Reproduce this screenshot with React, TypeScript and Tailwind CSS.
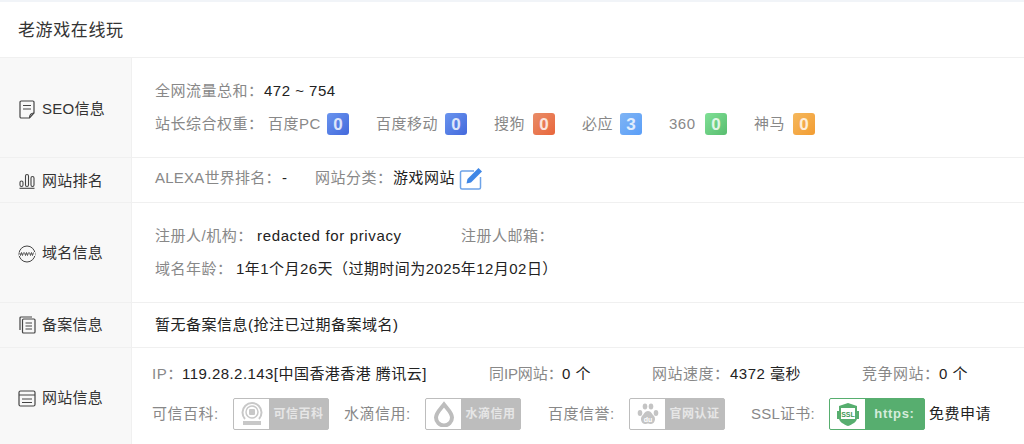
const FONT = "font-['Liberation_Sans','Noto_Sans_CJK_SC',sans-serif]";

function Score({ value, className }: { value: string; className: string }) {
  return (
    <span className={`ml-2 flex h-[22px] w-[22px] items-center justify-center rounded-[3px] bg-gradient-to-br text-[17px] font-bold leading-none tracking-normal text-white/80 ${className}`}>
      {value}
    </span>
  );
}

function SideLabel({ icon, label, className = "" }: { icon: React.ReactNode; label: string; className?: string }) {
  return (
    <div className={`flex w-[132px] shrink-0 items-center border-r border-[#f0f0f0] bg-[#f8f8f8] pl-[18px] text-[15px] tracking-[0.25px] text-[#333] ${className}`}>
      <span className="mr-[6px] flex h-5 w-[18px] items-center justify-center">{icon}</span>
      {label}
    </div>
  );
}

function Badge({ icon, text, green }: { icon: React.ReactNode; text: string; green?: boolean }) {
  return (
    <span className={`flex h-8 w-[96px] items-stretch overflow-hidden rounded-[2px] border ${green ? "border-[#57ae6f] bg-[#57ae6f]" : "border-[#bdbdbd] bg-[#bdbdbd]"}`}>
      <span className="flex w-[35px] shrink-0 items-center justify-center bg-white">{icon}</span>
      <span className={`flex flex-1 items-center justify-center font-bold ${green ? "text-[13px] tracking-[0.7px] text-[#d5ecdb]" : "text-[12px] text-[#e6e6e6]"}`}>{text}</span>
    </span>
  );
}

const Label = ({ children, className = "" }: { children: React.ReactNode; className?: string }) => (
  <span className={`whitespace-nowrap text-[#888] ${className}`}>{children}</span>
);

export default function App() {
  return (
    <div className={`h-[444px] w-[1024px] overflow-hidden bg-white text-[15px] tracking-[0.5px] text-[#222] ${FONT}`}>
      <div className="h-[2px] bg-[#f1f4f8]" />
      <div className="flex h-[56px] items-center border-b border-[#f0f0f0] pl-[18px] pt-[3px] text-[17px] tracking-[0.6px] text-[#333]">老游戏在线玩</div>

      {/* SEO */}
      <div className="flex h-[100px] border-b border-[#f0f0f0]">
        <SideLabel
          className="pt-1"
          label="SEO信息"
          icon={
            <svg width="16" height="19" viewBox="0 0 16 19" fill="none" stroke="#444" strokeWidth="1.2">
              <path d="M10.500 18H2.200A1.200 1.200 0 0 1 1 16.800V2.200A1.200 1.200 0 0 1 2.200 1h11.600A1.200 1.200 0 0 1 15 2.200V13z" />
              <path d="M4 5.500h8M4 9h8M10.500 18c0-3.500 1-4.800 4.500-5" />
            </svg>
          }
        />
        <div className="flex flex-col pl-[23px] pt-[21px]">
          <div className="flex h-[24px] items-center">
            <Label className="w-[109px]">全网流量总和：</Label>
            <span>472 ~ 754</span>
          </div>
          <div className="mt-[9px] flex h-[24px] items-center">
            <Label className="w-[113px]">站长综合权重：</Label>
            <Label className="w-[51px]">百度PC</Label>
            <Score value="0" className="from-[#6a94ee] to-[#4469dc]" />
            <Label className="ml-[27px] w-[61px]">百度移动</Label>
            <Score value="0" className="from-[#6a94ee] to-[#4469dc]" />
            <Label className="ml-[27px] w-[31px]">搜狗</Label>
            <Score value="0" className="from-[#e98d68] to-[#e8653a]" />
            <Label className="ml-[27px] w-[30px]">必应</Label>
            <Score value="3" className="from-[#7fb4f4] to-[#5a9ef8]" />
            <Label className="ml-[27px] w-[28px]">360</Label>
            <Score value="0" className="from-[#80e096] to-[#58bd6f]" />
            <Label className="ml-[27px] w-[31px]">神马</Label>
            <Score value="0" className="from-[#f5b85c] to-[#f29c30]" />
          </div>
        </div>
      </div>

      {/* 排名 */}
      <div className="flex h-[45px] border-b border-[#f0f0f0]">
        <SideLabel
          className="pt-[2px]"
          label="网站排名"
          icon={
            <svg width="16" height="16" viewBox="0 0 16 16" fill="none" stroke="#444" strokeWidth="1.100">
              <rect x="1" y="8" width="3" height="5.500" rx="1.500" />
              <rect x="6.500" y="1.500" width="3" height="12" rx="1.500" />
              <rect x="12" y="3.500" width="3" height="10" rx="1.500" />
              <path d="M0.500 15.300h15" />
            </svg>
          }
        />
        <div className="flex items-center pb-[3px] pl-[23px]">
          <Label className="w-[127px] tracking-[0.25px]">ALEXA世界排名：</Label>
          <span className="w-[33px]">-</span>
          <Label className="w-[78px]">网站分类：</Label>
          <span>游戏网站</span>
          <svg className="ml-[4px]" width="24" height="23" viewBox="0 0 24 23" fill="none">
            <path d="M15 4H3a1.500 1.500 0 0 0-1.500 1.500v15A1.500 1.500 0 0 0 3 22h17a1.500 1.500 0 0 0 1.500-1.500V10" stroke="#6ea3e8" strokeWidth="1.500" />
            <path d="M19.500 1 23 4.500 12 15.500l-4.500 1 1-4.500z" fill="#3f87e6" />
          </svg>
        </div>
      </div>

      {/* 域名 */}
      <div className="flex h-[100px] border-b border-[#f0f0f0]">
        <SideLabel
          className="pt-[2px]"
          label="域名信息"
          icon={
            <svg width="18" height="18" viewBox="0 0 18 18" fill="none" stroke="#444">
              <circle cx="9" cy="9" r="8" strokeWidth="1" />
              <path d="M1 9h16" stroke="#f8f8f8" strokeWidth="4" />
              <path d="m1.500 7.500 1 3 1-3 1 3 1-3M6.500 7.500l1 3 1-3 1 3 1-3M11.500 7.500l1 3 1-3 1 3 1-3" strokeWidth="0.900" />
            </svg>
          }
        />
        <div className="flex flex-col pl-[23px] pt-[21px]">
          <div className="flex h-[24px] items-center">
            <Label className="w-[102px]">注册人/机构：</Label>
            <span className="w-[204px] tracking-[0.65px]">redacted for privacy</span>
            <Label>注册人邮箱：</Label>
          </div>
          <div className="mt-[9px] flex h-[24px] items-center">
            <Label className="w-[81px]">域名年龄：</Label>
            <span className="tracking-[0.45px]">1年1个月26天（过期时间为2025年12月02日）</span>
          </div>
        </div>
      </div>

      {/* 备案 */}
      <div className="flex h-[45px] border-b border-[#f0f0f0]">
        <SideLabel
          label="备案信息"
          icon={
            <svg width="17" height="18" viewBox="0 0 17 18" fill="none" stroke="#444" strokeWidth="1.200">
              <rect x="3.500" y="3" width="12.500" height="14" rx="1" />
              <path d="M1 14V2a1 1 0 0 1 1-1h11M6.500 7h6.500M6.500 10h6.500M6.500 13h6.500" />
            </svg>
          }
        />
        <div className="flex items-center pl-[23px]">暂无备案信息(抢注已过期备案域名)</div>
      </div>

      {/* 网站信息 */}
      <div className="flex h-[97px]">
        <SideLabel
          className="pt-1"
          label="网站信息"
          icon={
            <svg width="18" height="17" viewBox="0 0 18 17" fill="none" stroke="#444" strokeWidth="1.200">
              <rect x="1" y="1" width="16" height="15" rx="1.500" />
              <path d="M1 5h16M4 9h10M4 12.500h10" />
            </svg>
          }
        />
        <div className="flex flex-col pl-[20px] pt-[14px]">
          <div className="flex h-[24px] items-center">
            <Label className="w-[30px]">IP：</Label>
            <span className="w-[307px] whitespace-nowrap tracking-[0.45px]">119.28.2.143[中国香港香港 腾讯云]</span>
            <Label className="w-[73px] tracking-[-0.1px]">同IP网站：</Label>
            <span className="w-[90px]">0 个</span>
            <Label className="w-[78px]">网站速度：</Label>
            <span className="w-[132px]">4372 毫秒</span>
            <Label className="w-[77px]">竞争网站：</Label>
            <span>0 个</span>
          </div>
          <div className="mt-[12px] flex h-[32px] items-center">
            <Label className="w-[81px]">可信百科:</Label>
            <Badge
              text="可信百科"
              icon={
                <svg width="28" height="28" viewBox="0 0 28 28" fill="none" stroke="#c8c8c8">
                  <path d="M7 19a9.500 9.500 0 1 1 14 0" strokeWidth="2" />
                  <circle cx="14" cy="12" r="6" strokeWidth="1.500" />
                  <rect x="11" y="9" width="6" height="6" rx="1" fill="#c8c8c8" stroke="none" />
                  <rect x="5" y="21" width="18" height="4" fill="#c8c8c8" stroke="none" />
                </svg>
              }
            />
            <Label className="ml-[15px] w-[81px]">水滴信用:</Label>
            <Badge
              text="水滴信用"
              icon={
                <svg width="22" height="26" viewBox="0 0 22 26" fill="none">
                  <path d="M11 3.500c4 5 8 8.500 8 13a8 8 0 0 1-16 0c0-4.500 4-8 8-13z" stroke="#bdbdbd" strokeWidth="4" />
                </svg>
              }
            />
            <Label className="ml-[27px] w-[81px]">百度信誉:</Label>
            <Badge
              text="官网认证"
              icon={
                <svg width="24" height="24" viewBox="0 0 24 24" fill="#c4c4c4">
                  <ellipse cx="4" cy="11" rx="2.300" ry="3" />
                  <ellipse cx="9" cy="4.500" rx="2.300" ry="3" />
                  <ellipse cx="15" cy="4.500" rx="2.300" ry="3" />
                  <ellipse cx="20" cy="11" rx="2.300" ry="3" />
                  <path d="M12 9c3 0 4 3 6 5 2.500 3.500 0 8-3 8-1.500 0-2-.5-3-.5s-1.500.5-3 .5c-3 0-5.500-4.500-3-8 2-2 3-5 6-5z" />
                  <text x="12" y="20" fontSize="7" fontWeight="700" fill="#fff" textAnchor="middle" letterSpacing="0">du</text>
                </svg>
              }
            />
            <Label className="ml-[26px] w-[78px] tracking-[0.25px]">SSL证书:</Label>
            <Badge
              green
              text="https:"
              icon={
                <svg width="24" height="25" viewBox="0 0 24 25">
                  <path d="M12 1 21 4v12c0 4-5 6.500-9 8-4-1.500-9-4-9-8V4z" fill="#57ae6f" />
                  <rect x="1" y="9" width="22" height="8" fill="#57ae6f" />
                  <rect x="5" y="6" width="14" height="11" fill="#fff" />
                  <text x="12" y="14.500" fontSize="7" fontWeight="700" fill="#3f9a58" textAnchor="middle" letterSpacing="0">SSL</text>
                </svg>
              }
            />
            <span className="ml-[4px] whitespace-nowrap">免费申请</span>
          </div>
        </div>
      </div>
    </div>
  );
}
